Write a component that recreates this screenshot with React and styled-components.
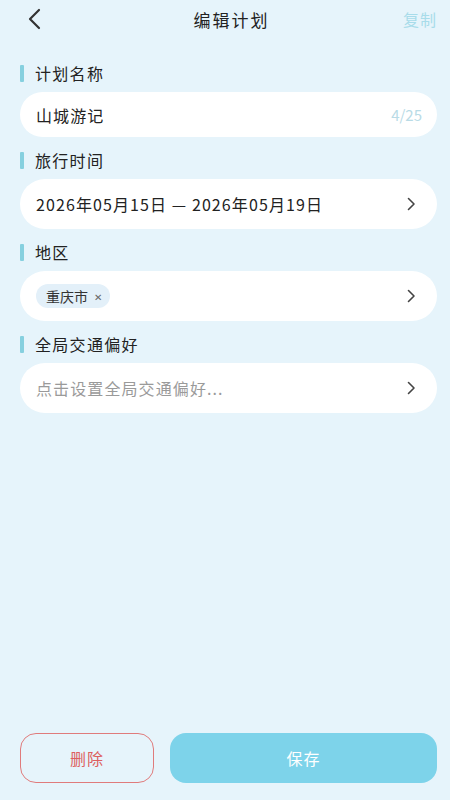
import styled, { createGlobalStyle } from "styled-components";

const GlobalStyle = createGlobalStyle`
  html, body {
    margin: 0;
    padding: 0;
    background: #e6f4fb;
  }
  body {
    font-family: "Noto Sans CJK SC", "Noto Sans", sans-serif;
    color: #222;
  }
`;

const Page = styled.div`
  min-height: 100vh;
  box-sizing: border-box;
  display: flex;
  flex-direction: column;
  padding: 0 13px 17px 20px;
  background: #e6f4fb;
`;

const Header = styled.div`
  height: 38px;
  display: flex;
  align-items: center;
  justify-content: space-between;
`;

const BackButton = styled.div`
  width: 40px;
  display: flex;
  align-items: center;
  padding-left: 6px;
`;

const Title = styled.div`
  font-size: 17px;
  font-weight: 400;
  color: #222;
  letter-spacing: 2px;
`;

const Copy = styled.div`
  width: 40px;
  text-align: right;
  font-size: 16px;
  color: #a8dcea;
  letter-spacing: 1px;
`;

const Form = styled.div`
  margin-top: 25px;
  display: flex;
  flex-direction: column;
`;

const Label = styled.div`
  height: 20px;
  display: flex;
  align-items: center;
  gap: 11px;
  font-size: 16px;
  font-weight: 400;
  color: #222;
  letter-spacing: 1.3px;
  margin-top: ${(p) => (p.$first ? "0" : "13px")};
  margin-bottom: 9px;

  &::before {
    content: "";
    width: 4px;
    height: 17px;
    background: #86d0df;
    border-radius: 1px;
  }
`;

const Card = styled.div`
  height: ${(p) => p.$h || 50}px;
  background: #fff;
  border-radius: 25px;
  display: flex;
  align-items: center;
  padding: 0 21px 0 16px;
  box-sizing: border-box;
`;

const Value = styled.div`
  flex: 1;
  font-size: 16px;
  color: ${(p) => (p.$placeholder ? "#9a9a9a" : "#222")};
  letter-spacing: 1.1px;
  white-space: nowrap;
`;

const Counter = styled.div`
  font-size: 15px;
  color: #b9dbe6;
  margin-right: -6px;
`;

const Chip = styled.div`
  display: flex;
  align-items: center;
  gap: 6px;
  height: 24px;
  padding: 0 8px 0 10px;
  border-radius: 12px;
  background: #e3f0f9;
  font-size: 14px;
  color: #333;
  margin-right: auto;

  span {
    font-size: 10px;
    color: #666;
  }
`;

const Footer = styled.div`
  margin-top: auto;
  display: flex;
  gap: 16px;
`;

const DeleteButton = styled.button`
  width: 134px;
  height: 50px;
  box-sizing: border-box;
  border: 1.5px solid #e07b7b;
  border-radius: 16px;
  background: transparent;
  color: #dd5f5f;
  font-family: inherit;
  font-size: 16px;
  letter-spacing: 1px;
`;

const SaveButton = styled.button`
  flex: 1;
  height: 50px;
  border: none;
  border-radius: 16px;
  background: #7dd3ea;
  color: #fff;
  font-family: inherit;
  font-size: 16px;
  letter-spacing: 1px;
`;

const Chevron = () => (
  <svg width="10" height="16" viewBox="0 0 10 16">
    <path
      d="M2.5 2.5 L8 8 L2.5 13.5"
      fill="none"
      stroke="#444"
      strokeWidth="1.6"
      strokeLinecap="round"
      strokeLinejoin="round"
    />
  </svg>
);

const BackIcon = () => (
  <svg width="16" height="22" viewBox="0 0 16 22">
    <path
      d="M13 2 L4 11 L13 20"
      fill="none"
      stroke="#333"
      strokeWidth="2.2"
      strokeLinecap="round"
      strokeLinejoin="round"
    />
  </svg>
);

const App = () => {
  return (
    <>
      <GlobalStyle />
      <Page>
        <Header>
          <BackButton>
            <BackIcon />
          </BackButton>
          <Title>编辑计划</Title>
          <Copy>复制</Copy>
        </Header>

        <Form>
          <Label $first>计划名称</Label>
          <Card $h={45}>
            <Value>山城游记</Value>
            <Counter>4/25</Counter>
          </Card>

          <Label>旅行时间</Label>
          <Card>
            <Value>2026年05月15日 — 2026年05月19日</Value>
            <Chevron />
          </Card>

          <Label>地区</Label>
          <Card>
            <Chip>
              重庆市 <span>✕</span>
            </Chip>
            <Chevron />
          </Card>

          <Label>全局交通偏好</Label>
          <Card>
            <Value $placeholder>点击设置全局交通偏好...</Value>
            <Chevron />
          </Card>
        </Form>

        <Footer>
          <DeleteButton>删除</DeleteButton>
          <SaveButton>保存</SaveButton>
        </Footer>
      </Page>
    </>
  );
};

export default App;
